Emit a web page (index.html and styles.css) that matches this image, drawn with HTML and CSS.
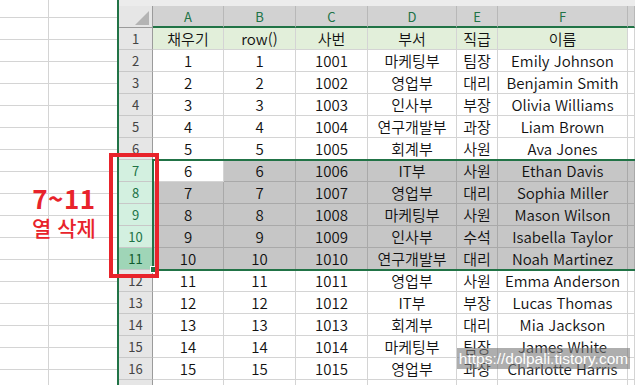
FILE: index.html
```html
<!DOCTYPE html>
<html lang="ko">
<head>
<meta charset="utf-8">
<title>행 삭제</title>
<link rel="stylesheet" href="styles.css">
</head>
<body>
<div class="left"></div>
<div class="divider"></div>
<div class="sheet">
  <div class="topbar"></div>
  <div class="grid">
    <div class="corner"><span class="tri"></span></div>
    <div class="ch">A</div><div class="ch">B</div><div class="ch">C</div><div class="ch">D</div><div class="ch">E</div><div class="ch">F</div><div class="ch"></div>

    <div class="rh">1</div><div class="c hd">채우기</div><div class="c hd">row()</div><div class="c hd">사번</div><div class="c hd">부서</div><div class="c hd">직급</div><div class="c hd">이름</div><div class="c"></div>
    <div class="rh">2</div><div class="c">1</div><div class="c">1</div><div class="c">1001</div><div class="c">마케팅부</div><div class="c">팀장</div><div class="c">Emily Johnson</div><div class="c"></div>
    <div class="rh">3</div><div class="c">2</div><div class="c">2</div><div class="c">1002</div><div class="c">영업부</div><div class="c">대리</div><div class="c">Benjamin Smith</div><div class="c"></div>
    <div class="rh">4</div><div class="c">3</div><div class="c">3</div><div class="c">1003</div><div class="c">인사부</div><div class="c">부장</div><div class="c">Olivia Williams</div><div class="c"></div>
    <div class="rh">5</div><div class="c">4</div><div class="c">4</div><div class="c">1004</div><div class="c">연구개발부</div><div class="c">과장</div><div class="c">Liam Brown</div><div class="c"></div>
    <div class="rh">6</div><div class="c">5</div><div class="c">5</div><div class="c">1005</div><div class="c">회계부</div><div class="c">사원</div><div class="c">Ava Jones</div><div class="c"></div>
    <div class="rh s">7</div><div class="c">6</div><div class="c s">6</div><div class="c s">1006</div><div class="c s">IT부</div><div class="c s">사원</div><div class="c s">Ethan Davis</div><div class="c s"></div>
    <div class="rh s">8</div><div class="c s">7</div><div class="c s">7</div><div class="c s">1007</div><div class="c s">영업부</div><div class="c s">대리</div><div class="c s">Sophia Miller</div><div class="c s"></div>
    <div class="rh s">9</div><div class="c s">8</div><div class="c s">8</div><div class="c s">1008</div><div class="c s">마케팅부</div><div class="c s">사원</div><div class="c s">Mason Wilson</div><div class="c s"></div>
    <div class="rh s">10</div><div class="c s">9</div><div class="c s">9</div><div class="c s">1009</div><div class="c s">인사부</div><div class="c s">수석</div><div class="c s">Isabella Taylor</div><div class="c s"></div>
    <div class="rh a">11</div><div class="c s">10</div><div class="c s">10</div><div class="c s">1010</div><div class="c s">연구개발부</div><div class="c s">대리</div><div class="c s">Noah Martinez</div><div class="c s"></div>
    <div class="rh">12</div><div class="c">11</div><div class="c">11</div><div class="c">1011</div><div class="c">영업부</div><div class="c">사원</div><div class="c">Emma Anderson</div><div class="c"></div>
    <div class="rh">13</div><div class="c">12</div><div class="c">12</div><div class="c">1012</div><div class="c">IT부</div><div class="c">부장</div><div class="c">Lucas Thomas</div><div class="c"></div>
    <div class="rh">14</div><div class="c">13</div><div class="c">13</div><div class="c">1013</div><div class="c">회계부</div><div class="c">대리</div><div class="c">Mia Jackson</div><div class="c"></div>
    <div class="rh">15</div><div class="c">14</div><div class="c">14</div><div class="c">1014</div><div class="c">마케팅부</div><div class="c">팀장</div><div class="c">James White</div><div class="c"></div>
    <div class="rh">16</div><div class="c">15</div><div class="c">15</div><div class="c">1015</div><div class="c">영업부</div><div class="c">과장</div><div class="c">Charlotte Harris</div><div class="c"></div>
    <div class="rh"></div><div class="c"></div><div class="c"></div><div class="c"></div><div class="c"></div><div class="c"></div><div class="c"></div><div class="c"></div>

    <div class="selection"><span class="handle"></span></div>
  </div>
</div>

<div class="mark"></div>
<div class="note">
  <div class="big">7~11</div>
  <div class="small">열 삭제</div>
</div>
<div class="wm">https://dolpali.tistory.com</div>
</body>
</html>
```

FILE: styles.css
```css
html, body {
  margin: 0;
  padding: 0;
}

body {
  width: 635px;
  height: 385px;
  overflow: hidden;
  position: relative;
  display: flex;
  background: #fff;
  font-family: "Noto Sans CJK KR", "Noto Sans", sans-serif;
}

.left {
  flex: none;
  width: 117px;
  background-color: #fff;
  background-image:
    linear-gradient(#d4d4d4, #d4d4d4),
    linear-gradient(to bottom, transparent 21px, #d4d4d4 21px);
  background-size: 1px 100%, 100% 22px;
  background-position: 48px 0, 0 -4px;
  background-repeat: no-repeat, repeat;
}

.divider {
  flex: none;
  width: 2px;
  background: #217346;
}

.sheet {
  flex: 1;
  min-width: 0;
  display: flex;
  flex-direction: column;
}

.topbar {
  flex: none;
  height: 6px;
  background: #ececec;
}

.grid {
  position: relative;
  display: grid;
  grid-template-columns: 34px 71px 72px 72px 89px 41px 130px 1fr;
  grid-auto-rows: 22px;
}

.grid > div {
  box-sizing: border-box;
}

.corner {
  background: #e6e6e6;
  border-right: 1px solid #9b9b9b;
  border-bottom: 1px solid #9b9b9b;
  display: flex;
  justify-content: flex-end;
  align-items: flex-end;
  padding: 0 3px 2px 0;
}

.tri {
  width: 0;
  height: 0;
  border-left: 14px solid transparent;
  border-bottom: 14px solid #b4b4b4;
}

.ch {
  background: #d2d2d2;
  border-right: 1px solid #b8b8b8;
  border-bottom: 2px solid #217346;
  color: #217346;
  font-size: 13px;
  display: flex;
  align-items: center;
  justify-content: center;
}

.rh {
  background: #e6e6e6;
  border-right: 1px solid #9b9b9b;
  border-bottom: 1px solid #c8c8c8;
  color: #444;
  font-size: 13px;
  display: flex;
  align-items: center;
  justify-content: center;
}

.rh.s {
  background: #d3f0e0;
  color: #217346;
}

.rh.a {
  background: #9fd5b7;
  color: #0f5b2e;
}

.c {
  border-right: 1px solid #d4d4d4;
  border-bottom: 1px solid #d4d4d4;
  font-size: 15px;
  font-weight: 350;
  color: #111;
  display: flex;
  align-items: center;
  justify-content: center;
  white-space: nowrap;
  overflow: hidden;
}

.c.hd {
  background: #e2efda;
}

.c.s {
  background: #c6c6c6;
  border-color: #a9a9a9;
}

.selection {
  position: absolute;
  left: 33px;
  top: 153px;
  right: 0;
  height: 112px;
  border: 2px solid #217346;
  border-right: 0;
  box-sizing: border-box;
  pointer-events: none;
}

.handle {
  position: absolute;
  left: -4px;
  bottom: -4px;
  width: 5px;
  height: 5px;
  background: #217346;
  border: 1px solid #fff;
}

.mark {
  position: absolute;
  left: 109px;
  top: 153px;
  width: 50px;
  height: 125px;
  border: 4px solid #e8232b;
  box-sizing: border-box;
}

.note {
  position: absolute;
  left: 24px;
  top: 183px;
  width: 80px;
  text-align: center;
  color: #e8232b;
  font-weight: 700;
}

.note .big {
  font-size: 26px;
  line-height: 30px;
  letter-spacing: 0.5px;
}

.note .small {
  font-size: 21px;
  line-height: 28px;
  font-weight: 500;
}

.wm {
  position: absolute;
  left: 457px;
  top: 348px;
  width: 173px;
  height: 21px;
  background: rgba(120, 120, 120, 0.6);
  color: #fff;
  font-family: "Liberation Sans", Arial, sans-serif;
  font-size: 15.5px;
  line-height: 21px;
  text-align: center;
  white-space: nowrap;
}
```
